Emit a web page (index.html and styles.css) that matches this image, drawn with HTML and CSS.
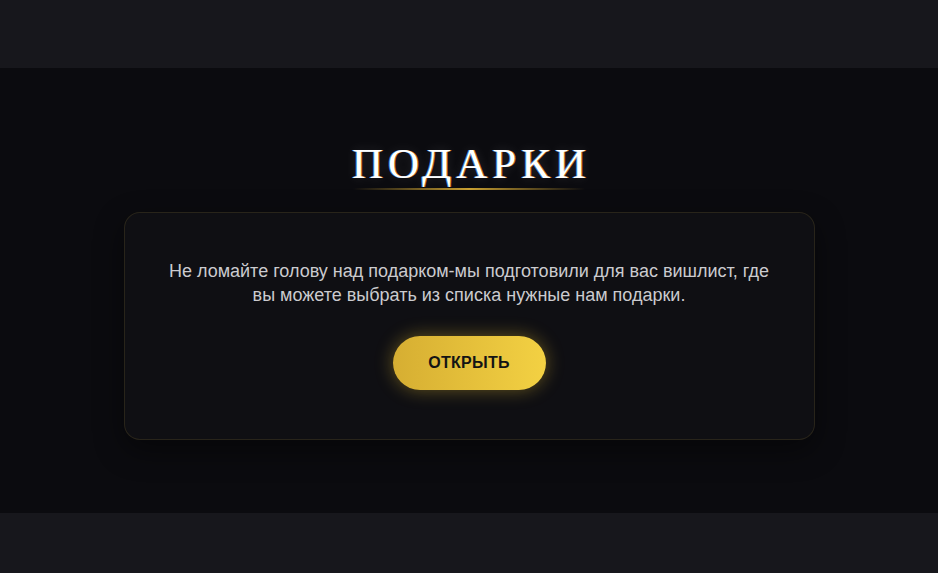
FILE: index.html
```html
<!DOCTYPE html>
<html lang="ru">
<head>
<meta charset="utf-8">
<title>Подарки</title>
<link rel="stylesheet" href="styles.css">
</head>
<body>
<div class="band"></div>
<section class="gifts">
  <div class="heading">
    <h2 class="title">ПОДАРКИ</h2>
    <div class="underline"></div>
  </div>
  <div class="card">
    <p class="text">Не ломайте голову над подарком-мы подготовили для вас вишлист, где вы можете выбрать из списка нужные нам подарки.</p>
    <a class="btn" href="#">ОТКРЫТЬ</a>
  </div>
</section>
<div class="band band-bottom"></div>
</body>
</html>
```
FILE: styles.css
```css
* { box-sizing: border-box; }
html, body { margin: 0; padding: 0; }
body {
  background: #17171c;
  font-family: "Liberation Sans", Arial, sans-serif;
  width: 938px;
  height: 573px;
  overflow: hidden;
}
.band { height: 68px; background: #17171c; }
.band-bottom { height: 60px; }
.gifts {
  height: 445px;
  background: #0b0b0f;
  display: flex;
  flex-direction: column;
  align-items: center;
  padding-top: 70px;
}
.heading {
  display: flex;
  flex-direction: column;
  align-items: center;
}
.title {
  margin: 0;
  font-family: "Liberation Serif", "Times New Roman", serif;
  font-weight: 400;
  font-size: 43px;
  line-height: 52px;
  letter-spacing: 5px;
  padding-left: 5px;
  color: #ffffff;
  text-shadow: -1px 0 0 rgba(90, 170, 255, 0.75), 1px 0 0 rgba(255, 150, 40, 0.75), 0 0 12px rgba(255, 255, 255, 0.15);
}
.underline {
  width: 232px;
  height: 2px;
  margin-top: -2px;
  background: linear-gradient(90deg, rgba(201, 160, 50, 0) 0%, #c9a032 50%, rgba(201, 160, 50, 0) 100%);
}
.card {
  margin-top: 22px;
  width: 691px;
  padding: 46px 40px 49px;
  background: #0f0f13;
  border: 1px solid rgba(200, 170, 70, 0.14);
  border-radius: 16px;
  box-shadow: 0 10px 30px rgba(0, 0, 0, 0.45);
  display: flex;
  flex-direction: column;
  align-items: center;
}
.text {
  margin: 0;
  max-width: 606px;
  text-align: center;
  color: #cbcbcf;
  font-size: 18px;
  line-height: 24px;
}
.btn {
  margin-top: 29px;
  width: 153px;
  height: 54px;
  border-radius: 27px;
  display: flex;
  align-items: center;
  justify-content: center;
  background: linear-gradient(90deg, #d6ae32 0%, #f3d143 100%);
  box-shadow: 0 0 18px rgba(230, 190, 50, 0.4);
  color: #141414;
  font-weight: 700;
  font-size: 16px;
  letter-spacing: 0.3px;
  text-decoration: none;
}
```
